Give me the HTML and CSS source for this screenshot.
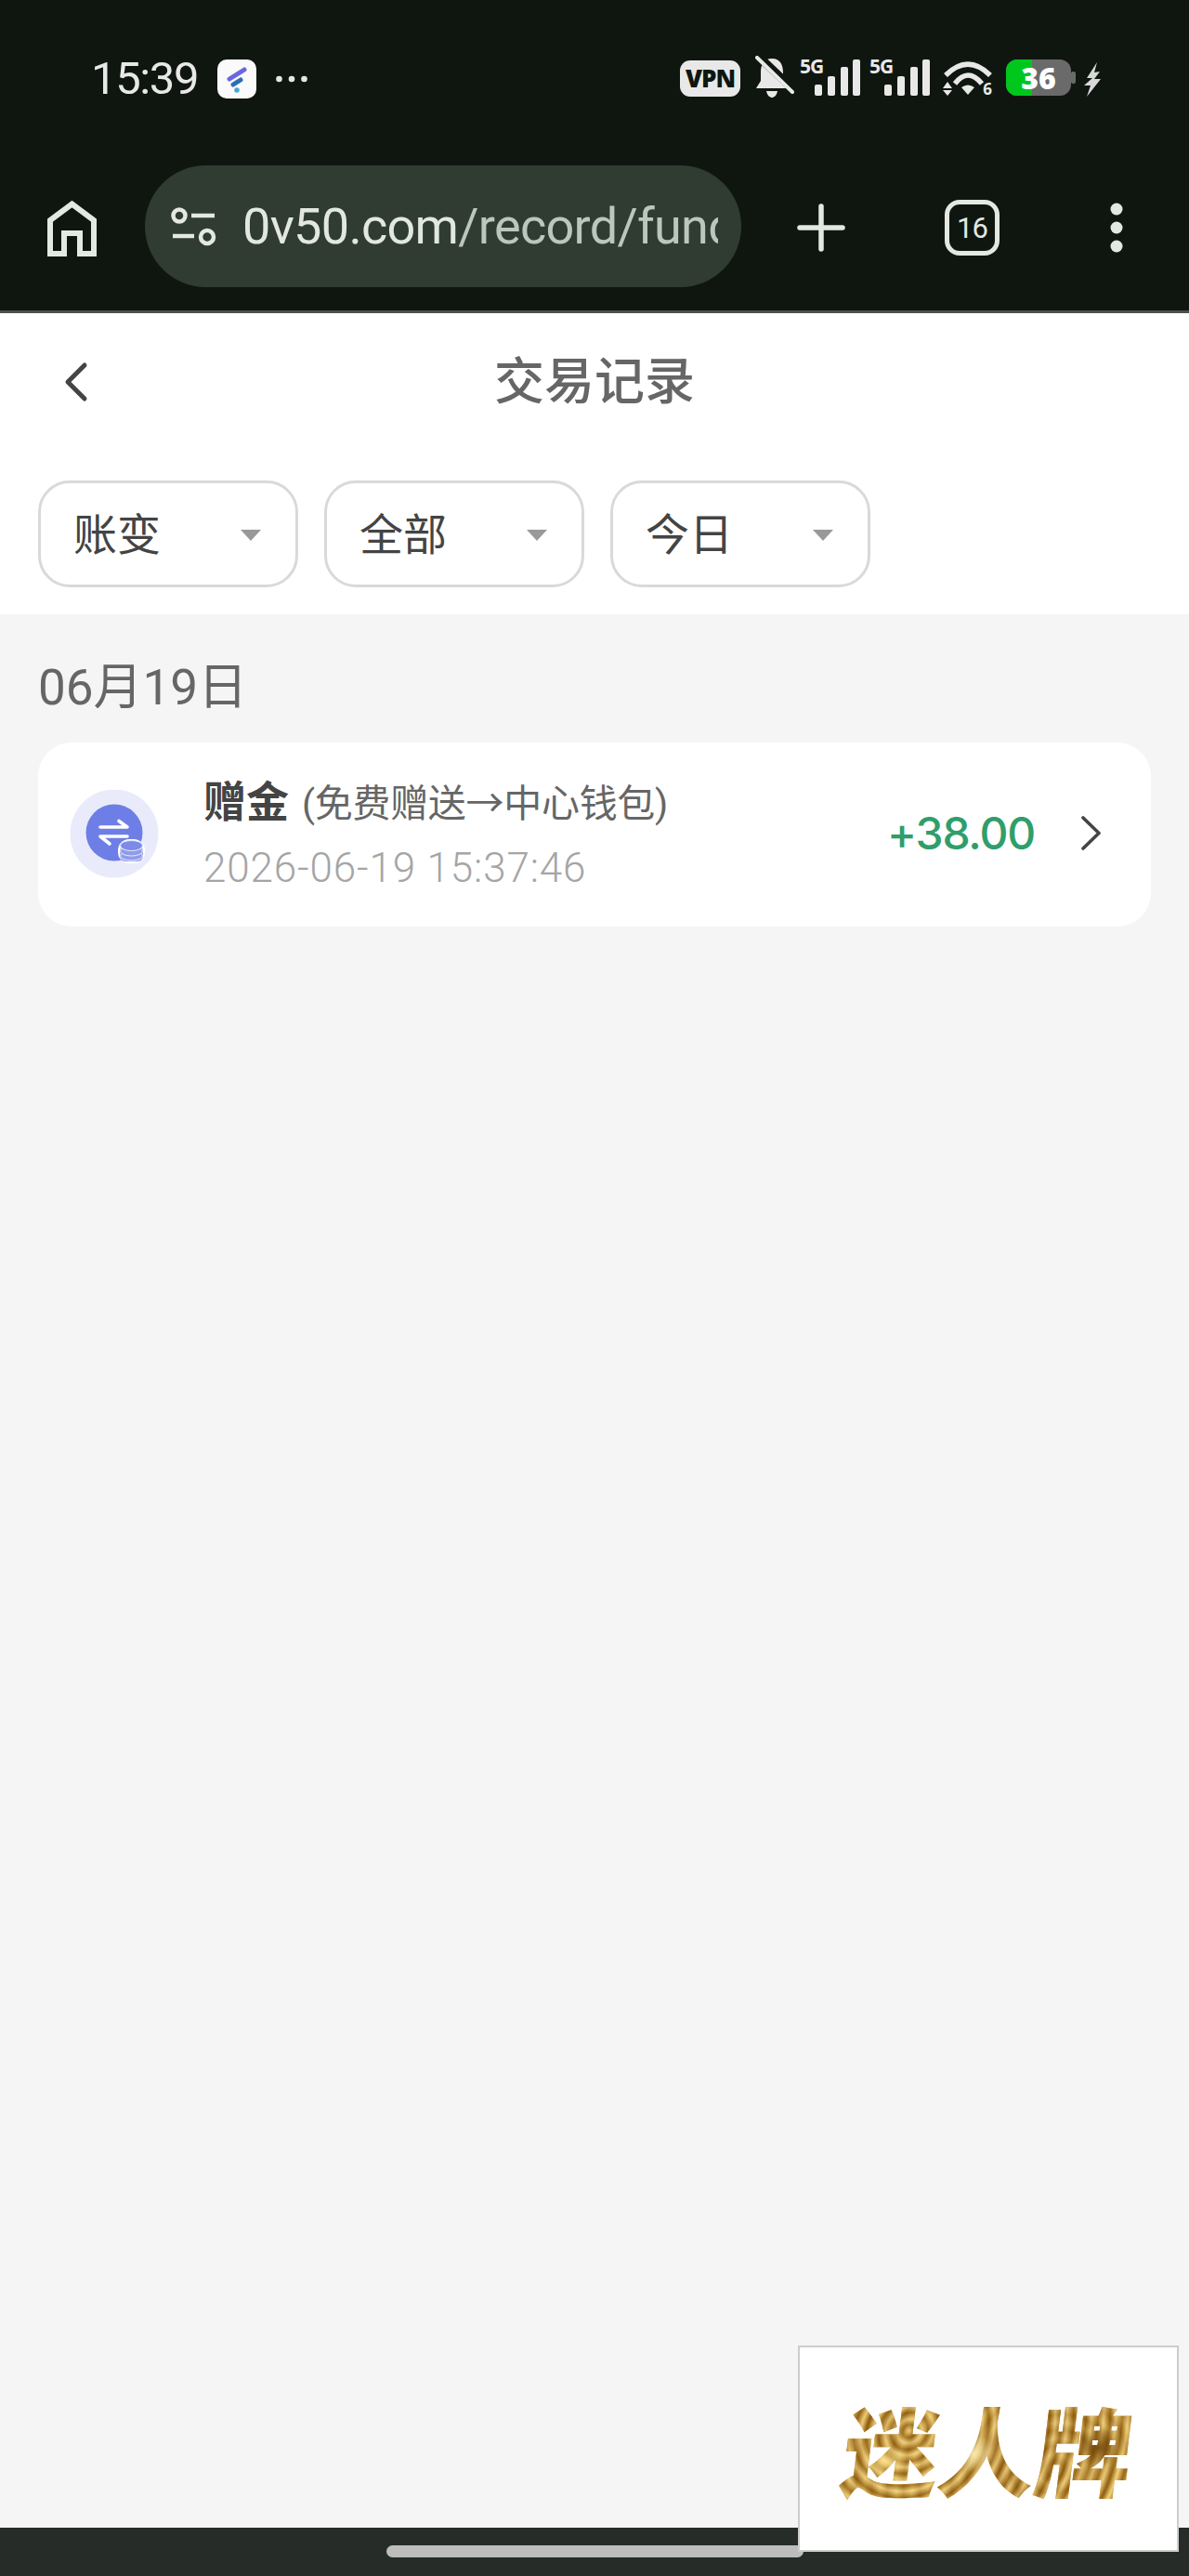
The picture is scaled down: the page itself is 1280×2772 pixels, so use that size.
FILE: index.html
```html
<!DOCTYPE html>
<html lang="zh-CN">
<head>
    <meta charset="UTF-8">
    <meta name="viewport" content="width=device-width, initial-scale=1.0">
    <title>交易记录</title>
    <link rel="stylesheet" href="styles.css">
</head>
<body>
    <div class="status-bar">
        <div class="status-left">
            <span class="clock">15:39</span>
            <svg class="notif-icon" width="42" height="42" viewBox="0 0 42 42">
                <rect width="42" height="42" rx="10" fill="#fafafa"/>
                <path d="M13 21 29 11" stroke="#6e66e0" stroke-width="5" stroke-linecap="round"/>
                <path d="M17 27 25 22" stroke="#2a6fb5" stroke-width="5" stroke-linecap="round"/>
                <circle cx="21" cy="33" r="2.8" fill="#4aa8d0"/>
            </svg>
            <svg class="more-dots" width="34" height="8" viewBox="0 0 34 8">
                <circle cx="3.5" cy="4" r="3.3" fill="#e6e6e6"/>
                <circle cx="17" cy="4" r="3.3" fill="#e6e6e6"/>
                <circle cx="30.5" cy="4" r="3.3" fill="#e6e6e6"/>
            </svg>
        </div>
        <div class="status-right">
            <div class="vpn">VPN</div>
            <svg class="bell" width="42" height="45" viewBox="0 0 42 45">
                <path d="M18 3C27 3 30 10 30 18V26L35 35H1L6 27V18C6 10 9 3 18 3Z" fill="#e8e8e8"/>
                <path d="M12 38H24C23 43 20 45 18 45 16 45 13 43 12 38Z" fill="#e8e8e8"/>
                <path d="M3 0 44 39" stroke="#0f1610" stroke-width="9"/>
                <path d="M2 2 40 39" stroke="#e8e8e8" stroke-width="4" stroke-linecap="round"/>
            </svg>
            <div class="signal">
                <span class="net-text">5G</span>
                <svg width="66" height="43" viewBox="0 0 66 43">
                    <rect x="16" y="30" width="8" height="12" rx="2" fill="#e8e8e8"/>
                    <rect x="30" y="21" width="8" height="21" rx="2" fill="#e8e8e8"/>
                    <rect x="44" y="11" width="8" height="31" rx="2" fill="#e8e8e8"/>
                    <rect x="57" y="3" width="8" height="39" rx="2" fill="#e8e8e8"/>
                </svg>
            </div>
            <div class="signal">
                <span class="net-text">5G</span>
                <svg width="66" height="43" viewBox="0 0 66 43">
                    <rect x="16" y="30" width="8" height="12" rx="2" fill="#e8e8e8"/>
                    <rect x="30" y="21" width="8" height="21" rx="2" fill="#e8e8e8"/>
                    <rect x="44" y="11" width="8" height="31" rx="2" fill="#e8e8e8"/>
                    <rect x="57" y="3" width="8" height="39" rx="2" fill="#e8e8e8"/>
                </svg>
            </div>
            <div class="wifi">
                <svg width="54" height="38" viewBox="0 0 54 38">
                    <path d="M3 15Q27 -9 51 15" fill="none" stroke="#e8e8e8" stroke-width="5.5"/>
                    <path d="M13 24Q27 6 42 24" fill="none" stroke="#e8e8e8" stroke-width="5.5"/>
                    <path d="M20 28Q27 23 34 28L27 36Z" fill="#e8e8e8"/>
                    <path d="M5 22 10 29H0ZM5 37 0 31H10Z" fill="#e8e8e8"/>
                </svg>
                <span class="wifi-text">6</span>
            </div>
            <div class="battery">
                <svg width="75" height="39" viewBox="0 0 75 39">
                    <rect width="70" height="39" rx="12" fill="#6a6a6a"/>
                    <rect x="70" y="13" width="5" height="13" rx="2" fill="#6a6a6a"/>
                    <path d="M12 0H28V39H12A12 12 0 0 1 0 27V12A12 12 0 0 1 12 0Z" fill="#00c71c"/>
                </svg>
                <span class="battery-text">36</span>
            </div>
            <svg class="bolt" width="18" height="37" viewBox="0 0 18 37">
                <path d="M14 0 3 17 9 17 0 25 7 25 3 37 18 18 11 18 17 10 11 11Z" fill="#d8d8d8"/>
            </svg>
        </div>
    </div>

    <div class="toolbar">
        <svg class="home-icon" width="53" height="60" viewBox="0 0 53 60">
            <path d="M3 57V21L26.5 3.500 50 21V57H35V35H18V57Z" fill="none" stroke="#e4e8e2" stroke-width="6"/>
        </svg>
        <div class="url-pill">
            <svg class="tune-icon" width="49" height="42" viewBox="0 0 49 42">
                <circle cx="9" cy="9" r="6.5" fill="none" stroke="#e4e8e2" stroke-width="4.5"/>
                <path d="M22 9H47" stroke="#e4e8e2" stroke-width="4.5"/>
                <circle cx="39" cy="32" r="7" fill="none" stroke="#e4e8e2" stroke-width="4.5"/>
                <path d="M2 31H25" stroke="#e4e8e2" stroke-width="4.5"/>
            </svg>
            <div class="url-text"><span class="url-host">0v50.com</span>/record/funds</div>
        </div>
        <svg class="plus-icon" width="52" height="52" viewBox="0 0 52 52">
            <path d="M26 3V49M3 26H49" stroke="#e4e8e2" stroke-width="5.5" stroke-linecap="round"/>
        </svg>
        <div class="tab-count">16</div>
        <svg class="kebab-icon" width="14" height="54" viewBox="0 0 14 54">
            <circle cx="7" cy="7" r="6.5" fill="#e4e8e2"/>
            <circle cx="7" cy="27" r="6.5" fill="#e4e8e2"/>
            <circle cx="7" cy="47" r="6.5" fill="#e4e8e2"/>
        </svg>
    </div>

    <div class="page">
        <div class="page-head">
            <div class="title-row">
                <svg class="back-icon" width="26" height="44" viewBox="0 0 26 44">
                    <path d="M22 4 4 22 22 40" fill="none" stroke="#444" stroke-width="5" stroke-linecap="round" stroke-linejoin="round"/>
                </svg>
                <h1 class="page-title">交易记录</h1>
            </div>
            <div class="filters">
                <div class="filter"><span>账变</span><i class="caret"></i></div>
                <div class="filter"><span>全部</span><i class="caret"></i></div>
                <div class="filter"><span>今日</span><i class="caret"></i></div>
            </div>
        </div>

        <div class="records">
            <div class="day-label">06月19日</div>
            <div class="record-card">
                <svg class="record-icon" width="96" height="96" viewBox="0 0 96 96">
                    <circle cx="48" cy="47" r="47.5" fill="#e9ebfb"/>
                    <circle cx="48" cy="46" r="30.5" fill="#6d7fe6"/>
                    <path d="M33 40H62L53 33.5" fill="none" stroke="#fff" stroke-width="3.6" stroke-linecap="round" stroke-linejoin="round"/>
                    <path d="M62 50H33L43 58" fill="none" stroke="#fff" stroke-width="3.6" stroke-linecap="round" stroke-linejoin="round"/>
                    <rect x="52" y="53" width="29" height="26" rx="12" fill="#fff"/>
                    <rect x="54" y="60" width="25" height="17" rx="6" fill="#8f9cea"/>
                    <ellipse cx="66.500" cy="71" rx="12" ry="5" fill="#8f9cea" stroke="#e9ebfb" stroke-width="1"/>
                    <ellipse cx="66.500" cy="66" rx="12" ry="5" fill="#8f9cea" stroke="#e9ebfb" stroke-width="1"/>
                    <ellipse cx="66.500" cy="60" rx="12" ry="5.500" fill="#7c8be8" stroke="#e9ebfb" stroke-width="1"/>
                </svg>
                <div class="record-info">
                    <div class="record-title"><b>赠金</b><span class="record-sub">(免费赠送→中心钱包)</span></div>
                    <div class="record-time">2026-06-19 15:37:46</div>
                </div>
                <div class="record-amount">+38.00</div>
                <svg class="next-icon" width="21" height="37" viewBox="0 0 21 37">
                    <path d="M2 2 19 18.500 2 35" fill="none" stroke="#444" stroke-width="3.6" stroke-linecap="round" stroke-linejoin="round"/>
                </svg>
            </div>
        </div>
    </div>

    <div class="nav-bar"><div class="nav-handle"></div></div>

    <div class="float-ad"><span class="ad-text">迷人牌</span></div>
</body>
</html>
```

FILE: styles.css
```css
* {
    margin: 0;
    padding: 0;
    box-sizing: border-box;
}

html, body {
    height: 100%;
}

body {
    position: relative;
    display: flex;
    flex-direction: column;
    min-height: 2772px;
    background-color: #f5f5f5;
    font-family: Roboto, "Noto Sans CJK SC", sans-serif;
}

/* Phone status bar */
.status-bar {
    display: flex;
    justify-content: space-between;
    align-items: flex-start;
    height: 150px;
    padding: 60px 95px 0 98px;
    background-color: #0f1610;
}

.status-left {
    display: flex;
    align-items: center;
    height: 50px;
}

.clock {
    width: 114px;
    color: #e8e8e8;
    font-size: 49px;
    line-height: 50px;
    letter-spacing: -1.4px;
    white-space: nowrap;
}

.notif-icon {
    margin-left: 22px;
}

.more-dots {
    margin-left: 21px;
}

.status-right {
    display: flex;
    align-items: flex-start;
}

.vpn {
    width: 65px;
    height: 39px;
    margin-top: 5px;
    background-color: #e8e8e8;
    border-radius: 11px;
    color: #0f1610;
    font-family: "Open Sans", sans-serif;
    font-size: 26px;
    font-weight: 800;
    letter-spacing: -1px;
    line-height: 39px;
    text-align: center;
}

.bell {
    margin-left: 16px;
}

.signal {
    position: relative;
    height: 43px;
    margin-top: 1px;
    margin-left: 6px;
}

.signal + .signal {
    margin-left: 9px;
}

.net-text {
    position: absolute;
    left: 0;
    top: -1px;
    color: #e8e8e8;
    font-family: "Open Sans", sans-serif;
    font-size: 21px;
    font-weight: 700;
    letter-spacing: -1px;
    line-height: 22px;
}

.wifi {
    position: relative;
    height: 38px;
    margin-top: 6px;
    margin-left: 13px;
}

.wifi-text {
    position: absolute;
    right: 1px;
    bottom: 0;
    color: #e8e8e8;
    font-family: "Open Sans", sans-serif;
    font-size: 17px;
    font-weight: 700;
    line-height: 17px;
}

.battery {
    position: relative;
    height: 39px;
    margin-top: 4px;
    margin-left: 14px;
}

.battery-text {
    position: absolute;
    left: 16px;
    top: 0;
    width: 38px;
    color: #fff;
    font-family: "Open Sans", sans-serif;
    font-size: 32px;
    font-weight: 800;
    line-height: 39px;
    text-align: center;
}

.bolt {
    margin-top: 7px;
    margin-left: 9px;
}

/* Browser toolbar */
.toolbar {
    display: flex;
    align-items: flex-start;
    height: 187px;
    padding: 28px 0 0 51px;
    background-color: #0f1610;
    border-bottom: 3px solid #4b514b;
}

.home-icon {
    flex-shrink: 0;
    margin-top: 38px;
}

.url-pill {
    display: flex;
    align-items: center;
    flex-shrink: 0;
    width: 642px;
    height: 131px;
    margin-left: 52px;
    padding: 0 25px 0 28px;
    background-color: #303c31;
    border-radius: 66px;
}

.tune-icon {
    flex-shrink: 0;
}

.url-text {
    flex: 1;
    margin-left: 28px;
    overflow: hidden;
    color: #bcc7bb;
    font-size: 54px;
    letter-spacing: -0.7px;
    line-height: 70px;
    white-space: nowrap;
}

.url-host {
    color: #e2e8df;
}

.plus-icon {
    flex-shrink: 0;
    margin-top: 41px;
    margin-left: 60px;
}

.tab-count {
    display: flex;
    justify-content: center;
    align-items: center;
    flex-shrink: 0;
    width: 59px;
    height: 60px;
    margin-top: 37px;
    margin-left: 107px;
    border: 5px solid #e4e8e2;
    border-radius: 16px;
    color: #e4e8e2;
    font-size: 31px;
    letter-spacing: -1px;
}

.kebab-icon {
    flex-shrink: 0;
    margin-top: 40px;
    margin-left: 119px;
}

/* Page */
.page {
    flex: 1;
}

.page-head {
    padding-bottom: 29px;
    background-color: #fff;
}

.title-row {
    position: relative;
    display: flex;
    justify-content: center;
    align-items: center;
    height: 180px;
    padding-bottom: 31px;
}

.back-icon {
    position: absolute;
    left: 69px;
    top: 52px;
}

.page-title {
    color: #666;
    font-size: 54px;
    font-weight: 500;
    line-height: 72px;
}

.filters {
    display: flex;
    gap: 28px;
    padding-left: 41px;
}

.filter {
    display: flex;
    justify-content: space-between;
    align-items: center;
    width: 280px;
    height: 115px;
    padding: 0 37px 7px 35px;
    border: 3px solid #d9d9d9;
    border-radius: 34px;
    color: #444;
    font-size: 47px;
}

.caret {
    width: 0;
    height: 0;
    margin-top: 10px;
    border-left: 11px solid transparent;
    border-right: 11px solid transparent;
    border-top: 12px solid #999;
}

.records {
    padding: 49px 41px 0;
}

.day-label {
    margin-bottom: 29px;
    color: #666;
    font-size: 53px;
    line-height: 60px;
}

.record-card {
    display: flex;
    align-items: center;
    height: 198px;
    padding: 0 54px 0 34px;
    background-color: #fff;
    border-radius: 36px;
}

.record-icon {
    flex-shrink: 0;
}

.record-info {
    flex: 1;
    margin-bottom: 2px;
    margin-left: 48px;
}

.record-title {
    color: #666;
    font-size: 41px;
    line-height: 58px;
}

.record-title b {
    color: #444;
    font-size: 46px;
    font-weight: 700;
}

.record-sub {
    margin-left: 14px;
    letter-spacing: -0.3px;
}

.record-time {
    margin-top: 14px;
    color: #a5a5a5;
    font-size: 44px;
    font-weight: 300;
    letter-spacing: 0.85px;
    line-height: 52px;
}

.record-amount {
    margin-bottom: 4px;
    color: #2f9e6b;
    font-family: Inter, sans-serif;
    font-size: 48px;
    font-weight: 500;
    letter-spacing: -1.2px;
}

.next-icon {
    flex-shrink: 0;
    margin-bottom: 3px;
    margin-left: 50px;
}

/* Gesture bar */
.nav-bar {
    display: flex;
    justify-content: center;
    height: 52px;
    padding-top: 19px;
    background-color: #262c27;
}

.nav-handle {
    width: 449px;
    height: 13px;
    background-color: #bdbdbd;
    border-radius: 7px;
}

/* Floating ad over the page */
.float-ad {
    position: absolute;
    right: 11px;
    bottom: 26px;
    display: flex;
    justify-content: center;
    align-items: center;
    width: 410px;
    height: 222px;
    background-color: #fff;
    border: 2px solid #ccc;
}

.ad-text {
    display: inline-block;
    margin-bottom: 2px;
    background-color: #c48a14;
    background-image:
        radial-gradient(ellipse 26px 14px at 15% 62%, rgba(250, 225, 140, 0.9) 0, rgba(250, 225, 140, 0) 100%),
        radial-gradient(ellipse 24px 20px at 45% 55%, rgba(252, 235, 175, 0.95) 0, rgba(252, 235, 175, 0) 100%),
        radial-gradient(ellipse 26px 22px at 88% 50%, rgba(110, 66, 4, 0.9) 0, rgba(110, 66, 4, 0) 100%),
        repeating-radial-gradient(circle at 22% 35%, rgba(255, 232, 160, 0.55) 0, rgba(120, 72, 4, 0.55) 7px, rgba(255, 232, 160, 0.55) 13px),
        repeating-radial-gradient(circle at 74% 70%, rgba(255, 225, 140, 0.5) 0, rgba(130, 78, 6, 0.5) 9px, rgba(255, 225, 140, 0.5) 17px),
        linear-gradient(115deg, #a96f0c, #e2b23d 35%, #a8700e 60%, #d9a733);
    -webkit-background-clip: text;
    background-clip: text;
    color: transparent;
    font-family: "Noto Sans CJK SC", sans-serif;
    font-size: 104px;
    font-weight: 900;
    line-height: 120px;
    transform: skewX(-7deg);
    white-space: nowrap;
}
```
